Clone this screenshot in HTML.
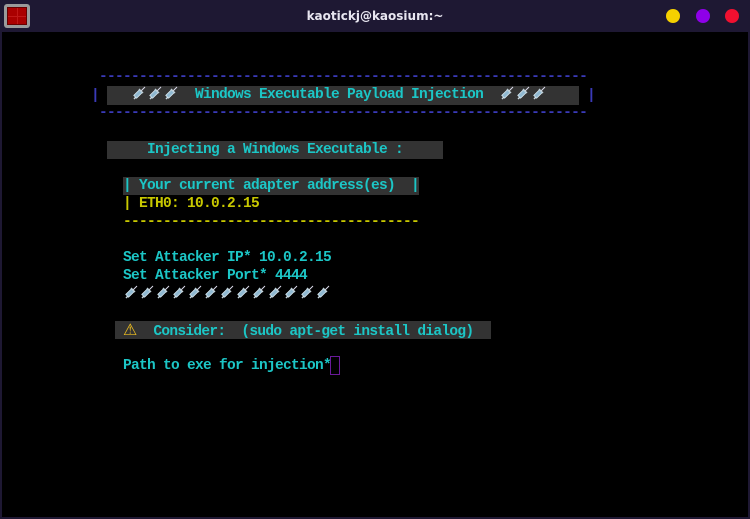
<!DOCTYPE html>
<html><head><meta charset="utf-8"><style>
*{margin:0;padding:0;box-sizing:border-box}
body{width:750px;height:519px;background:#1e1833;position:relative;overflow:hidden;font-family:"Liberation Mono",monospace}
#term{position:absolute;left:2px;top:32px;width:746px;height:485px;background:#000}
#tb{position:absolute;left:0;top:0;width:750px;height:32px;background:#1e1833}
#tt{position:absolute;left:0;width:750px;top:9px;text-align:center;color:#e8e6f0;font:bold 12px "DejaVu Sans",sans-serif}
.dot{position:absolute;top:9px;width:14px;height:14px;border-radius:50%}
.l{position:absolute;height:18px;line-height:18px;font-size:14.5px;letter-spacing:-0.7px;font-weight:bold;white-space:pre;color:#1cc6c6}
.bg{background:#333}
.y{color:#c8c800}
.b{color:#3a3ab8}
.s{display:inline-block;width:16px;height:14px;vertical-align:-2px}
</style></head><body>
<div id="tb">
 <div style="position:absolute;left:4px;top:4px;width:26px;height:24px;background:#9a9a9a;border-radius:3px;padding:3px">
  <div style="width:20px;height:18px;background:#c01818;display:grid;grid-template-columns:1fr 1fr;gap:1px;border:1px solid #600"><i style="background:#a00"></i><i style="background:#a00"></i><i style="background:#a00"></i><i style="background:#a00"></i></div>
 </div>
 <div id="tt">kaotickj@kaosium:~</div>
 <div class="dot" style="left:666px;background:#f5d000"></div>
 <div class="dot" style="left:696px;background:#8e00e8"></div>
 <div class="dot" style="left:725px;background:#f01030"></div>
</div>
<div id="term"></div>
<svg width="0" height="0" style="position:absolute"><defs><g id="sy"><path d="M3 13 L6 10" stroke="#c8d8e0" stroke-width="1.5"/><rect x="5" y="4" width="4" height="8" transform="rotate(45 7 8)" fill="#8fb8d0" stroke="#d8e8f0" stroke-width="0.8"/><path d="M10 5 L14 1" stroke="#dde" stroke-width="1"/><path d="M8 3 L12 7" stroke="#c0d0d8" stroke-width="1.4"/></g></defs></svg>

<div class="l b" style="left:99px;top:68px">-------------------------------------------------------------</div>
<div class="l b" style="left:91px;top:87px">|</div>
<div class="l b" style="left:587px;top:87px">|</div>
<div class="l bg" style="left:107px;top:86px;width:472px;height:19px;line-height:19px">   <svg class="s"><use href="#sy"/></svg><svg class="s"><use href="#sy"/></svg><svg class="s"><use href="#sy"/></svg>  Windows Executable Payload Injection  <svg class="s"><use href="#sy"/></svg><svg class="s"><use href="#sy"/></svg><svg class="s"><use href="#sy"/></svg></div>
<div class="l b" style="left:99px;top:104px">-------------------------------------------------------------</div>

<div class="l bg" style="left:107px;top:141px;width:336px">     Injecting a Windows Executable :</div>
<div class="l bg" style="left:123px;top:177px;width:296px">| Your current adapter address(es)  |</div>
<div class="l y" style="left:123px;top:195px">| ETH0: 10.0.2.15</div>
<div class="l y" style="left:123px;top:213px">-------------------------------------</div>
<div class="l" style="left:123px;top:249px">Set Attacker IP* 10.0.2.15</div>
<div class="l" style="left:123px;top:267px">Set Attacker Port* 4444</div>
<div class="l" style="left:123px;top:285px"><svg class="s"><use href="#sy"/></svg><svg class="s"><use href="#sy"/></svg><svg class="s"><use href="#sy"/></svg><svg class="s"><use href="#sy"/></svg><svg class="s"><use href="#sy"/></svg><svg class="s"><use href="#sy"/></svg><svg class="s"><use href="#sy"/></svg><svg class="s"><use href="#sy"/></svg><svg class="s"><use href="#sy"/></svg><svg class="s"><use href="#sy"/></svg><svg class="s"><use href="#sy"/></svg><svg class="s"><use href="#sy"/></svg><svg class="s"><use href="#sy"/></svg></div>
<div class="l bg" style="left:115px;top:321px;width:376px"> <span style="color:#f0c020;font-family:'DejaVu Sans',sans-serif;font-size:16px;letter-spacing:0">⚠</span>  Consider:  (sudo apt-get install dialog)</div>
<div class="l" style="left:123px;top:357px">Path to exe for injection*</div>
<div style="position:absolute;left:330px;top:356px;width:10px;height:19px;border:1px solid #6a1a9a"></div>
</body></html>
